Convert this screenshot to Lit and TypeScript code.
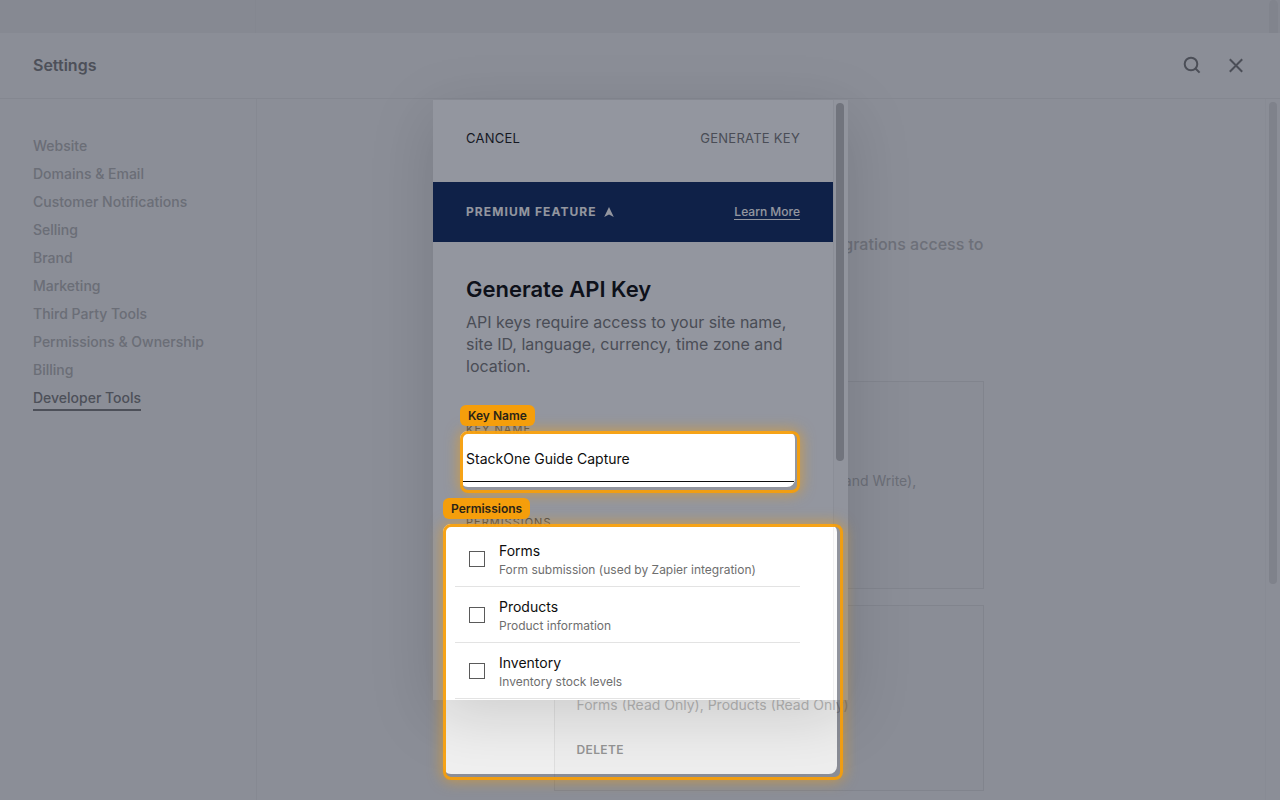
import { LitElement, html, css, svg } from "lit";
import { customElement } from "lit/decorators.js";

const NAV = [
  "Website",
  "Domains & Email",
  "Customer Notifications",
  "Selling",
  "Brand",
  "Marketing",
  "Third Party Tools",
  "Permissions & Ownership",
  "Billing",
  "Developer Tools",
];

const PERMISSIONS = [
  { id: "forms", name: "Forms", detail: "Form submission (used by Zapier integration)" },
  { id: "products", name: "Products", detail: "Product information" },
  { id: "inventory", name: "Inventory", detail: "Inventory stock levels" },
];

@customElement("settings-page")
class SettingsPage extends LitElement {
  static styles = css`
    :host { display: flex; flex-direction: column; height: 100%; color: #8b8b8b; background: #f0f0f0; }
    .strip { flex: none; height: 33px; display: flex; background: #e8e8e8; }
    .strip-side { width: 255px; border-right: 1px solid #e4e4e4; }
    .strip-bar { width: 9px; margin: 0 2px 0 auto; background: #dedede; border-radius: 5px 5px 0 0; }
    header { flex: none; height: 66px; box-sizing: border-box; display: flex; align-items: center; padding: 0 34px 1px 33px; border-bottom: 1px solid #e4e4e4; }
    h1 { margin: 0 auto 0 0; font-size: 16px; line-height: 24px; font-weight: 600; color: #808080; }
    button { border: 0; padding: 0; background: none; color: #7c7c7c; font: inherit; }
    .icon { width: 20px; height: 20px; margin-left: 24px; }
    .icon svg { display: block; }
    .body { flex: 1; min-height: 0; display: flex; position: relative; }
    nav { width: 257px; flex: none; box-sizing: border-box; border-right: 1px solid #e7e7e7; padding: 35px 33px; display: flex; flex-direction: column; align-items: flex-start; }
    nav a { font-size: 14px; line-height: 24px; margin-bottom: 4px; font-weight: 500; color: #b6b6b6; text-decoration: none; white-space: nowrap; }
    nav a.on { color: #808080; box-shadow: 0 1px 0 #808080, inset 0 -1px 0 #808080; }
    main { flex: 1; overflow: hidden; display: flex; justify-content: center; }
    .column { width: 430px; }
    .intro { margin: 133px 0 125px; text-align: right; font-size: 16px; line-height: 24px; font-weight: 500; color: #bababa; }
    .card { box-sizing: border-box; border: 1px solid #dfdfdf; background: #eeeeee; padding: 87px 22px 28px; font-size: 14px; line-height: 24px; white-space: nowrap; color: #b6b6b6; margin-bottom: 16px; }
    .card p { margin: 0 0 21px; }
    .card.tall { padding-bottom: 50px; }
    .card button { font-size: 12px; line-height: 24px; font-weight: 600; letter-spacing: 0.03em; color: #959595; display: block; }
    .thumb { position: absolute; right: 3px; top: 3px; width: 8px; height: 482px; border-radius: 4px; background: #dadada; }
    .track { position: absolute; right: 0; top: 0; bottom: 0; width: 14px; border-left: 1px solid #ebebeb; }
  `;
  render() {
    return html`
      <div class="strip"><div class="strip-side"></div><div class="strip-bar"></div></div>
      <header>
        <h1>Settings</h1>
        <button class="icon" aria-label="Search">
          <svg width="20" height="20" viewBox="0 0 20 20" fill="none" stroke="currentColor" stroke-width="2"><circle cx="9" cy="9" r="6.3" /><path d="M13.2 13.2 17.6 17.6" /></svg>
        </button>
        <button class="icon" aria-label="Close">
          <svg width="20" height="20" viewBox="0 0 20 20" fill="none" stroke="currentColor" stroke-width="2"><path d="M3.8 4.3 16.2 16.7M16.2 4.3 3.8 16.7" /></svg>
        </button>
      </header>
      <div class="body">
        <nav>${NAV.map((n) => html`<a href="#" class=${n === "Developer Tools" ? "on" : ""}>${n}</a>`)}</nav>
        <main>
          <div class="column">
            <p class="intro">integrations access to</p>
            <section class="card tall">
              <p>Products (Read Only), Customers (Read and Write),</p>
              <button>DELETE</button>
            </section>
            <section class="card">
              <p>Forms (Read Only), Products (Read Only)</p>
              <button>DELETE</button>
            </section>
          </div>
        </main>
        <div class="track"></div>
        <div class="thumb"></div>
      </div>
    `;
  }
}

@customElement("key-dialog")
class KeyDialog extends LitElement {
  static styles = css`
    :host { display: flex; width: 415px; height: 600px; background: #fff; color: #0e0e0e; overflow: hidden; }
    .pane { flex: 1; min-width: 0; overflow: hidden; }
    .bar { width: 14px; flex: none; border-left: 1px solid #f0f0f0; background: #fcfcfc; }
    .thumb { width: 8px; height: 358px; margin: 3px 0 0 2px; border-radius: 4px; background: #c1c1c1; }
    .actions { height: 82px; box-sizing: border-box; padding: 0 33px 6px; display: flex; align-items: center; justify-content: space-between; }
    button { border: 0; padding: 0; background: none; font: inherit; font-size: 13px; line-height: 20px; letter-spacing: 0.02em; color: #1a1a1a; }
    button:disabled { color: #7a7a7a; }
    .banner { height: 60px; padding: 0 33px; display: flex; align-items: center; justify-content: space-between; background: #0f2b62; color: #fff; }
    .premium { display: flex; align-items: center; gap: 7px; font-size: 12px; line-height: 20px; font-weight: 700; letter-spacing: 0.09em; }
    .banner a { font-size: 12px; line-height: 15px; font-weight: 500; color: #fff; text-decoration: none; border-bottom: 1px solid #fff; }
    .content { padding: 33px 33px 0; }
    h2 { margin: 0; font-size: 22px; line-height: 28px; font-weight: 600; }
    .about { margin: 8px 0 45px; font-size: 16px; line-height: 22px; color: #7a7a7a; }
    .caption { display: block; padding: 0; font-size: 11px; line-height: 14px; letter-spacing: 1px; color: #6e6e6e; }
    input[type="text"] { display: block; box-sizing: border-box; width: calc(100% - 2px); margin: -1px 6px 33px -4px; height: 47px; padding: 1px 4px 0; border: 0; border-bottom: 1px solid #0e0e0e; border-radius: 0; outline: 0; background: #fff; font: inherit; font-size: 14px; color: #0e0e0e; }
    fieldset { border: 0; margin: 0; padding: 0; min-width: 0; }
    ul { list-style: none; margin: 2px 0 0 -11px; padding: 0; }
    li { box-sizing: border-box; height: 56px; padding: 9px 14px 0; border-bottom: 1px solid #e3e3e3; display: grid; grid-template-columns: 16px 1fr; column-gap: 14px; align-items: start; }
    input[type="checkbox"] { appearance: none; width: 16px; height: 16px; margin: 11px 0 0; border: 1px solid #5a5a5a; background: #fff; }
    label.perm { display: block; font-size: 14px; line-height: 22px; }
    .perm small { display: block; font-size: 12px; line-height: 16px; color: #6e6e6e; }
  `;
  render() {
    return html`
      <div class="pane">
        <div class="actions"><button>CANCEL</button><button disabled>GENERATE KEY</button></div>
        <div class="banner">
          <span class="premium">PREMIUM FEATURE
            <svg width="10" height="11" viewBox="0 0 10 11" fill="currentColor" aria-hidden="true"><path d="M5 0 9.8 10 5 7.6.2 10Z" /></svg>
          </span>
          <a href="#">Learn More</a>
        </div>
        <div class="content">
          <h2>Generate API Key</h2>
          <p class="about">API keys require access to your site name, site ID, language, currency, time zone and location.</p>
          <label class="caption" for="key">KEY NAME</label>
          <input id="key" type="text" value="StackOne Guide Capture" />
          <fieldset>
            <legend class="caption">PERMISSIONS</legend>
            <ul>
              ${PERMISSIONS.map(
                (p) => html`<li>
                  <input type="checkbox" id=${p.id} />
                  <label class="perm" for=${p.id}>${p.name}<small>${p.detail}</small></label>
                </li>`
              )}
            </ul>
          </fieldset>
        </div>
      </div>
      <div class="bar"><div class="thumb"></div></div>
    `;
  }
}

/* Dimming layer with a cut-out, a ring and a tag for each highlighted part of the dialog. */
@customElement("guide-spotlight")
class GuideSpotlight extends LitElement {
  static styles = css`
    :host { display: block; width: 415px; height: 600px; pointer-events: none; }
    .dim { position: absolute; inset: 0; width: 100%; height: 100%; overflow: visible; }
    .ring { position: absolute; box-sizing: border-box; border: 3px solid #f59e0bf2; border-radius: 8px; }
    .ring::before { content: ""; position: absolute; inset: -3px; border-radius: 8px; box-shadow: 0 0 14px 1px #f59e0b8c; }
    .name { left: 27px; top: 331px; width: 340px; height: 62px; }
    .perms { left: 10px; top: 424px; width: 400px; height: 256px; }
    .tag { position: absolute; left: -3px; top: -29px; padding: 0 8px; font-size: 12px; line-height: 21px; font-weight: 600; color: #2b2417; background: #f59e0b; border-radius: 6px; white-space: nowrap; }
  `;
  render() {
    const hole = (x: number, y: number, w: number, h: number, r = 8) =>
      `M${x + r} ${y}H${x + w - r}A${r} ${r} 0 0 1 ${x + w} ${y + r}V${y + h - r}A${r} ${r} 0 0 1 ${x + w - r} ${y + h}H${x + r}A${r} ${r} 0 0 1 ${x} ${y + h - r}V${y + r}A${r} ${r} 0 0 1 ${x + r} ${y}Z`;
    const d = `M-4000 -4000H4500V4600H-4000Z${hole(27, 331, 335, 56)}${hole(10, 424, 394, 250)}`;
    return html`
      <svg class="dim">${svg`<path fill="#0f172a" fill-opacity="0.45" fill-rule="evenodd" d=${d} />`}</svg>
      <div class="ring name"><span class="tag">Key Name</span></div>
      <div class="ring perms"><span class="tag">Permissions</span></div>
    `;
  }
}

@customElement("app-root")
class AppRoot extends LitElement {
  static styles = css`
    :host { display: block; position: relative; height: 100vh; min-height: 640px; overflow: hidden; font-family: Inter, "Liberation Sans", sans-serif; }
    .layer { position: absolute; inset: 0; display: grid; place-items: center; padding-left: 1px; }
    key-dialog { box-shadow: 0 16px 60px rgba(0, 0, 0, 0.15); }
    guide-spotlight { position: relative; }
  `;
  render() {
    return html`
      <settings-page></settings-page>
      <div class="layer"><key-dialog role="dialog" aria-label="Generate API Key"></key-dialog></div>
      <div class="layer"><guide-spotlight></guide-spotlight></div>
    `;
  }
}
